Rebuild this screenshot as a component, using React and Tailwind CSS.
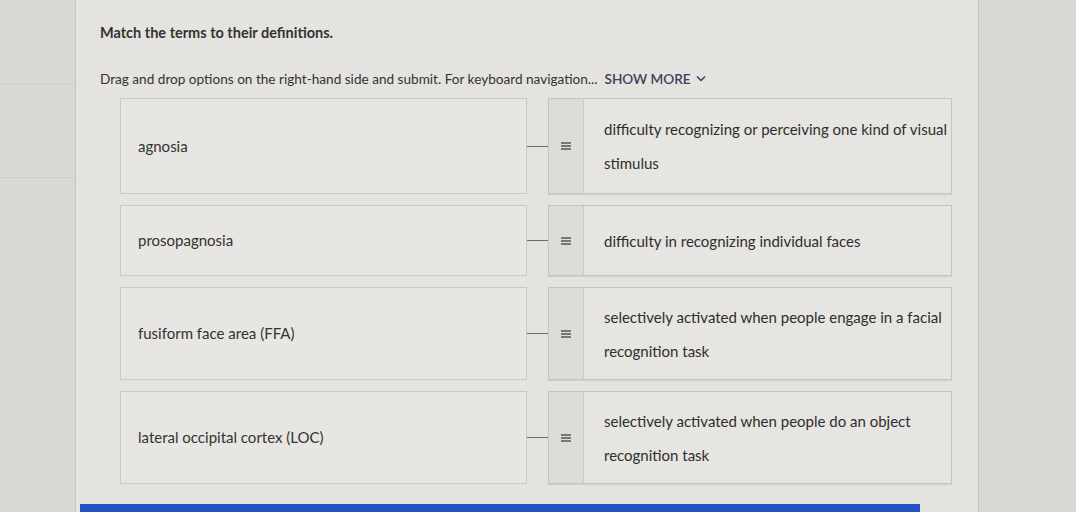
const PAIRS = [
  { term: 'agnosia', def: ['difficulty recognizing or perceiving one kind of visual', 'stimulus'], h: 'h-[96px]' },
  { term: 'prosopagnosia', def: ['difficulty in recognizing individual faces'], h: 'h-[71px]' },
  { term: 'fusiform face area (FFA)', def: ['selectively activated when people engage in a facial', 'recognition task'], h: 'h-[93px]' },
  { term: 'lateral occipital cortex (LOC)', def: ['selectively activated when people do an object', 'recognition task'], h: 'h-[93px]' },
];

function Handle() {
  return (
    <svg width="10" height="8" viewBox="0 0 10 8" className="text-[#555]">
      <path d="M0 1h10M0 4h10M0 7h10" stroke="currentColor" strokeWidth="1.3" />
    </svg>
  );
}

function Row({ pair }) {
  return (
    <div className={`flex items-stretch ${pair.h}`}>
      <div className="w-[407px] shrink-0 border border-[#c9c8c3] bg-[#e7e6e2] flex items-center pl-[17px] text-[15px] text-[#333]">
        {pair.term}
      </div>
      <div className="w-[21px] shrink-0 flex items-center">
        <div className="w-full h-px bg-[#6b6b6b]" />
      </div>
      <div className="w-[404px] shrink-0 border border-[#c4c3be] bg-[#e6e5e1] flex shadow-[0_1px_1px_rgba(0,0,0,0.08)]">
        <div className="w-[35px] shrink-0 bg-[#dddcd8] border-r border-[#c9c8c3] flex items-center justify-center">
          <Handle />
        </div>
        <div className="flex flex-col justify-center pl-[20px] text-[15px] leading-[34px] text-[#2e2e2e]">
          {pair.def.map((line) => (
            <span key={line}>{line}</span>
          ))}
        </div>
      </div>
    </div>
  );
}

export default function App() {
  return (
    <div className="w-[1076px] h-[512px] flex overflow-hidden font-['Lato','Noto_Sans',sans-serif]">
      <div className="w-[76px] shrink-0 bg-[#d9d8d4] border-r border-[#c8c7c3] flex flex-col">
        <div className="h-[85px] border-b border-[#cfcec9]" />
        <div className="h-[93px] border-b border-[#cfcec9]" />
      </div>
      <div className="flex-1 bg-[#e4e3df] flex flex-col relative">
        <div className="pl-[24px] pt-[22px]">
          <h1 className="text-[14.5px] font-bold text-[#333]">Match the terms to their definitions.</h1>
          <p className="mt-[25px] text-[13.6px] text-[#333] flex items-center">
            Drag and drop options on the right-hand side and submit. For keyboard navigation...
            <span className="ml-[7px] text-[#3d3f5c] font-semibold">SHOW MORE</span>
            <svg width="10" height="7" viewBox="0 0 10 7" className="ml-[5px]">
              <path d="M1 1.5l4 4 4-4" fill="none" stroke="#3d3f5c" strokeWidth="1.5" />
            </svg>
          </p>
        </div>
        <div className="pl-[44px] mt-[9px] flex flex-col gap-[11px]">
          {PAIRS.map((p) => (
            <Row key={p.term} pair={p} />
          ))}
        </div>
        <div className="absolute left-[4px] bottom-0 w-[840px] h-[8px] bg-[#2152c4]" />
      </div>
      <div className="w-[98px] shrink-0 bg-[#d8d7d3] border-l border-[#c6c5c1]" />
    </div>
  );
}
